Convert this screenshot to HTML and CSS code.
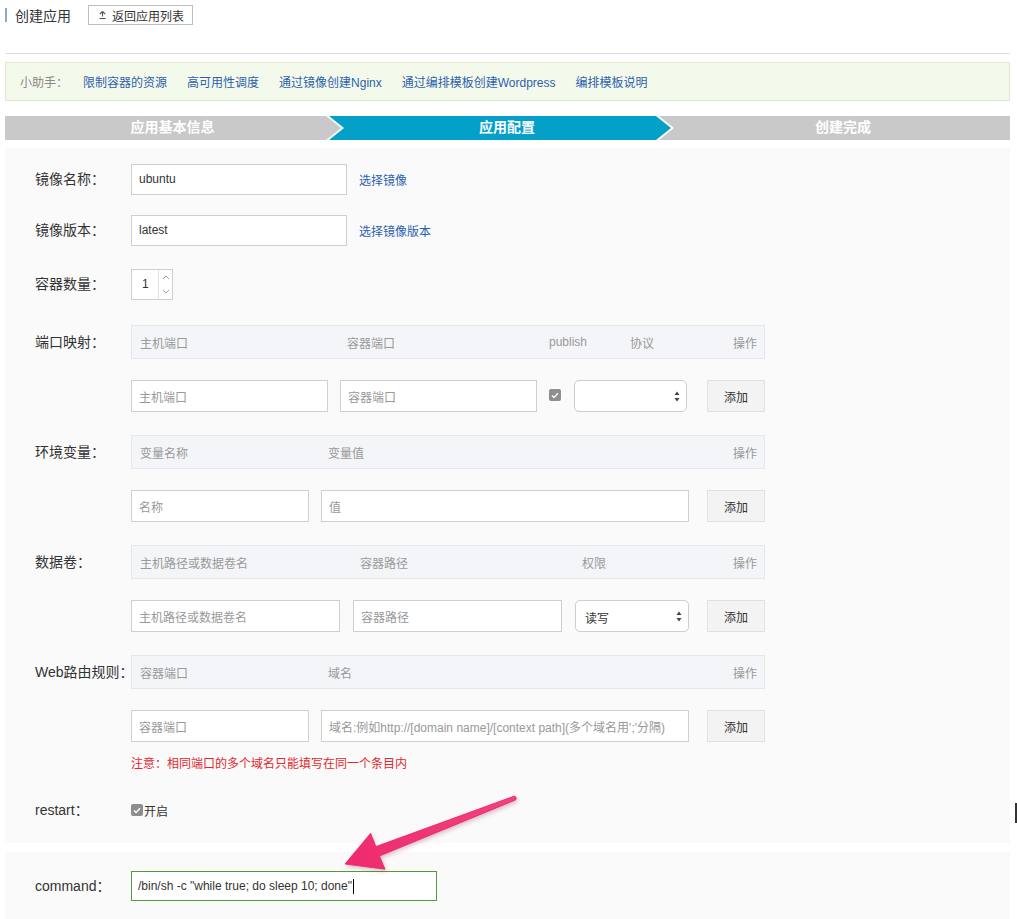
FILE: index.html
```html
<!DOCTYPE html>
<html lang="zh-CN">
<head>
<meta charset="utf-8">
<title>创建应用</title>
<link rel="stylesheet" href="styles.css">
</head>
<body>
<div class="page">
  <div class="title-row">
    <span class="title-bar"></span>
    <span class="title">创建应用</span>
    <button class="back-btn" type="button">
      <svg class="back-ico" width="9" height="10" viewBox="0 0 9 10"><path d="M4.5 1.5 L1.8 4.2 M4.5 1.5 L7.2 4.2 M4.5 1.5 V6.5 M1.5 8.5 H7.5" stroke="#555" stroke-width="1.1" fill="none"/></svg>
      返回应用列表
    </button>
  </div>
  <div class="divider"></div>

  <div class="helper">
    <span class="helper-label">小助手：</span>
    <a class="helper-link">限制容器的资源</a>
    <a class="helper-link">高可用性调度</a>
    <a class="helper-link">通过镜像创建Nginx</a>
    <a class="helper-link">通过编排模板创建Wordpress</a>
    <a class="helper-link">编排模板说明</a>
  </div>

  <div class="steps">
    <div class="step step-first">应用基本信息</div>
    <div class="step step-active"><span class="step-text">应用配置</span></div>
    <div class="step step-last">创建完成</div>
  </div>

  <div class="form-section">
    <div class="row row-1">
      <div class="lbl lbl-31">镜像名称：</div>
      <div class="ctl">
        <div class="input input-img">ubuntu</div>
        <a class="link">选择镜像</a>
      </div>
    </div>
    <div class="row row-2">
      <div class="lbl lbl-31">镜像版本：</div>
      <div class="ctl">
        <div class="input input-img">latest</div>
        <a class="link">选择镜像版本</a>
      </div>
    </div>
    <div class="row row-3">
      <div class="lbl lbl-31">容器数量：</div>
      <div class="ctl">
        <div class="num">
          <span class="num-val">1</span>
          <span class="spin">
            <span class="spin-half"><svg width="8" height="5" viewBox="0 0 8 5"><path d="M1 4 L4 1 L7 4" stroke="#999" fill="none" stroke-width="1"/></svg></span>
            <span class="spin-half"><svg width="8" height="5" viewBox="0 0 8 5"><path d="M1 1 L4 4 L7 1" stroke="#999" fill="none" stroke-width="1"/></svg></span>
          </span>
        </div>
      </div>
    </div>

    <div class="row block">
      <div class="lbl lbl-34">端口映射：</div>
      <div class="tbl">
        <div class="thead cols-port">
          <span>主机端口</span><span>容器端口</span><span>publish</span><span>协议</span><span class="op">操作</span>
        </div>
        <div class="trow">
          <div class="input ph w197">主机端口</div>
          <div class="input ph w197 ml12">容器端口</div>
          <span class="chk chk-pub"><svg width="8" height="7" viewBox="0 0 8 7"><path d="M1 3.6 L3 5.6 L7 1.2" stroke="#fff" stroke-width="1.4" fill="none"/></svg></span>
          <div class="select w113 ml13"><span class="sel-text"></span><svg class="sel-arrows" width="6" height="11" viewBox="0 0 6 11"><path d="M3 0.5 L5.5 4 H0.5 Z M3 10.5 L5.5 7 H0.5 Z" fill="#444"/></svg></div>
          <button class="add-btn ml20" type="button">添加</button>
        </div>
      </div>
    </div>

    <div class="row block">
      <div class="lbl lbl-34">环境变量：</div>
      <div class="tbl">
        <div class="thead cols-env">
          <span>变量名称</span><span>变量值</span><span class="op">操作</span>
        </div>
        <div class="trow">
          <div class="input ph w178">名称</div>
          <div class="input ph w368 ml12">值</div>
          <button class="add-btn ml18" type="button">添加</button>
        </div>
      </div>
    </div>

    <div class="row block">
      <div class="lbl lbl-34">数据卷：</div>
      <div class="tbl">
        <div class="thead cols-vol">
          <span>主机路径或数据卷名</span><span>容器路径</span><span>权限</span><span class="op">操作</span>
        </div>
        <div class="trow">
          <div class="input ph w209">主机路径或数据卷名</div>
          <div class="input ph w209 ml13">容器路径</div>
          <div class="select w114 ml13"><span class="sel-text">读写</span><svg class="sel-arrows" width="6" height="11" viewBox="0 0 6 11"><path d="M3 0.5 L5.5 4 H0.5 Z M3 10.5 L5.5 7 H0.5 Z" fill="#444"/></svg></div>
          <button class="add-btn ml18" type="button">添加</button>
        </div>
      </div>
    </div>

    <div class="row block block-web">
      <div class="lbl lbl-34">Web路由规则：</div>
      <div class="tbl">
        <div class="thead cols-env">
          <span>容器端口</span><span>域名</span><span class="op">操作</span>
        </div>
        <div class="trow">
          <div class="input ph w178">容器端口</div>
          <div class="input ph w368 ml12">域名:例如http://[domain name]/[context path](多个域名用';'分隔)</div>
          <button class="add-btn ml18" type="button">添加</button>
        </div>
        <div class="note">注意：相同端口的多个域名只能填写在同一个条目内</div>
      </div>
    </div>

    <div class="row row-restart">
      <div class="lbl lbl-20">restart：</div>
      <div class="ctl">
        <span class="chk chk-restart"><svg width="8" height="7" viewBox="0 0 8 7"><path d="M1 3.6 L3 5.6 L7 1.2" stroke="#fff" stroke-width="1.4" fill="none"/></svg></span>
        <span class="restart-text">开启</span>
      </div>
    </div>
  </div>

  <div class="form-section cmd-section">
    <div class="row">
      <div class="lbl lbl-30">command：</div>
      <div class="ctl">
        <div class="input cmd-input">/bin/sh -c "while true; do sleep 10; done"<span class="caret"></span></div>
      </div>
    </div>
  </div>
</div>

<svg class="annot-arrow" width="1017" height="919" viewBox="0 0 1017 919">
  <defs>
    <linearGradient id="ag" x1="515" y1="798" x2="345" y2="864" gradientUnits="userSpaceOnUse">
      <stop offset="0" stop-color="#f2437f"/>
      <stop offset="1" stop-color="#ee2a6c"/>
    </linearGradient>
  </defs>
  <path d="M514.3 796.1 L375.9 846.6 L370.6 833.3 L345 864 L385 869.2 L379.5 856 L515.7 799.9 Q517.5 797.2 514.3 796.1 Z" fill="url(#ag)" stroke="#e8236a" stroke-width="0.8" stroke-linejoin="round"/>
</svg>
<div class="edge-mark"></div>
</body>
</html>
```

FILE: styles.css
```css
* { box-sizing: border-box; }

body {
  margin: 0;
  background: #fff;
  color: #333;
  font-family: "Liberation Sans", "Noto Sans CJK SC", sans-serif;
  font-size: 12px;
}

.page {
  margin: 0 7px 0 5px;
  padding-top: 5px;
}

/* title */
.title-row {
  display: flex;
  align-items: center;
  height: 20px;
}
.title-bar {
  width: 2px;
  height: 14px;
  background: #8fa9c4;
}
.title {
  margin-left: 8px;
  font-size: 14px;
  color: #333;
}
.back-btn {
  margin-left: 17px;
  height: 20px;
  padding: 0 8px 0 9px;
  border: 1px solid #bdbdbd;
  background: #fff;
  font-family: inherit;
  font-size: 12px;
  color: #333;
  display: flex;
  align-items: center;
  gap: 5px;
  border-radius: 0;
}

.divider {
  margin-top: 28px;
  height: 1px;
  background: #dedede;
}

/* helper */
.helper {
  margin-top: 8px;
  height: 39px;
  border: 1px solid #dfe8d0;
  background: #f4faeb;
  display: flex;
  align-items: center;
  padding-left: 14px;
}
.helper-label {
  color: #888;
  margin-right: 15px;
}
.helper-link {
  color: #2c5fae;
  margin-right: 20px;
  cursor: pointer;
}

/* steps */
.steps {
  margin-top: 15px;
  height: 24px;
  background: #c9c9c9;
  display: flex;
}
.step {
  color: #fff;
  font-weight: bold;
  font-size: 14px;
  line-height: 23px;
  text-align: center;
}
.step-first { width: 335px; flex: none; }
.step-active {
  width: 348px;
  flex: none;
  margin-left: -14px;
  position: relative;
  background: #fff;
  clip-path: polygon(0 0, 333px 0, 348px 50%, 333px 100%, 0 100%, 15px 50%);
}
.step-active::before {
  content: "";
  position: absolute;
  inset: 0;
  background: #04a0c8;
  clip-path: polygon(3px 0, 330px 0, 345px 50%, 330px 100%, 3px 100%, 18px 50%);
}
.step-text {
  position: relative;
  display: block;
  padding-left: 14px;
}
.step-last { flex: 1; padding-left: 2px; }

/* form */
.form-section {
  margin-top: 8px;
  background: #fafafa;
  padding: 16px 0 23px 30px;
}
.cmd-section {
  margin-top: 9px;
  padding: 19px 0 20px 30px;
}

.row {
  display: flex;
  align-items: flex-start;
}
.row-1 { margin-bottom: 20px; }
.row-2 { margin-bottom: 23px; }
.row-3 { margin-bottom: 25px; }
.block { margin-bottom: 23px; }
.block-web { margin-bottom: 28px; }

.lbl {
  width: 96px;
  flex: none;
  font-size: 14px;
  color: #333;
  white-space: nowrap;
}
.lbl-31 { line-height: 31px; }
.lbl-34 { line-height: 34px; }
.lbl-20 { line-height: 20px; }
.lbl-30 { line-height: 30px; }

.ctl {
  display: flex;
  align-items: center;
}

.input {
  height: 32px;
  background: #fff;
  border: 1px solid #cfcfcf;
  padding-left: 7px;
  font-size: 12px;
  color: #333;
  display: flex;
  align-items: center;
  white-space: nowrap;
  overflow: hidden;
}
.input.ph { color: #999; }
.input-img {
  width: 216px;
  height: 31px;
  padding-bottom: 2px;
}
.link {
  margin-left: 12px;
  color: #2c5fae;
  cursor: pointer;
}

/* number */
.num {
  width: 42px;
  height: 31px;
  background: #fff;
  border: 1px solid #cfcfcf;
  display: flex;
}
.num-val {
  flex: 1;
  padding-left: 10px;
  line-height: 29px;
  font-size: 12px;
}
.spin {
  width: 14px;
  display: flex;
  flex-direction: column;
  border-left: 1px solid #e3e3e3;
}
.spin-half {
  flex: 1;
  display: flex;
  align-items: center;
  justify-content: center;
}

/* tables */
.tbl {
  width: 634px;
  flex: none;
}
.thead {
  height: 34px;
  background: #f3f5f8;
  border: 1px solid #e4e7eb;
  display: grid;
  align-items: center;
  padding: 0 7px 0 8px;
  color: #999;
  font-size: 12px;
}
.thead .op { text-align: right; }
.cols-port { grid-template-columns: 207px 202px 81px 1fr auto; }
.cols-env { grid-template-columns: 188px 1fr auto; }
.cols-vol { grid-template-columns: 220px 222px 1fr auto; }

.trow {
  margin-top: 21px;
  display: flex;
  align-items: center;
}
.w178 { width: 178px; }
.w197 { width: 197px; }
.w209 { width: 209px; }
.w368 { width: 368px; }
.w113 { width: 113px; }
.w114 { width: 114px; }
.ml12 { margin-left: 12px; }
.ml13 { margin-left: 13px; }
.ml18 { margin-left: 18px; }
.ml20 { margin-left: 20px; }

.chk {
  width: 12px;
  height: 12px;
  border-radius: 2px;
  background: #8e8e8e;
  display: inline-flex;
  align-items: center;
  justify-content: center;
  flex: none;
}
.chk-pub {
  margin-left: 12px;
  align-self: flex-start;
  margin-top: 9px;
}

.select {
  height: 32px;
  background: #fff;
  border: 1px solid #cdcdcd;
  border-radius: 5px;
  display: flex;
  align-items: center;
  padding: 0 6px 0 9px;
  font-size: 12px;
  color: #333;
}
.sel-text {
  flex: 1;
  padding-top: 3px;
}

.add-btn {
  width: 58px;
  height: 32px;
  background: #f3f3f3;
  border: 1px solid #e1e1e1;
  font-family: inherit;
  font-size: 12px;
  color: #333;
  padding: 0;
  border-radius: 0;
}

.note {
  margin-top: 14px;
  line-height: 16px;
  color: #e0282d;
  font-size: 12px;
}

.row-restart .ctl { height: 20px; }
.chk-restart { margin-right: 1px; }
.restart-text { font-size: 12px; }

.cmd-input {
  width: 306px;
  height: 30px;
  border: 1px solid #4f9e3a;
  padding-left: 6px;
}
.caret {
  display: inline-block;
  width: 1px;
  height: 15px;
  background: #000;
  margin-left: 1px;
}

/* annotation overlay */
.annot-arrow {
  position: absolute;
  left: 0;
  top: 0;
  pointer-events: none;
  filter: drop-shadow(1px 2px 2px rgba(120, 0, 40, 0.25));
}
.edge-mark {
  position: absolute;
  left: 1015px;
  top: 803px;
  width: 2px;
  height: 20px;
  background: #333;
}
```
